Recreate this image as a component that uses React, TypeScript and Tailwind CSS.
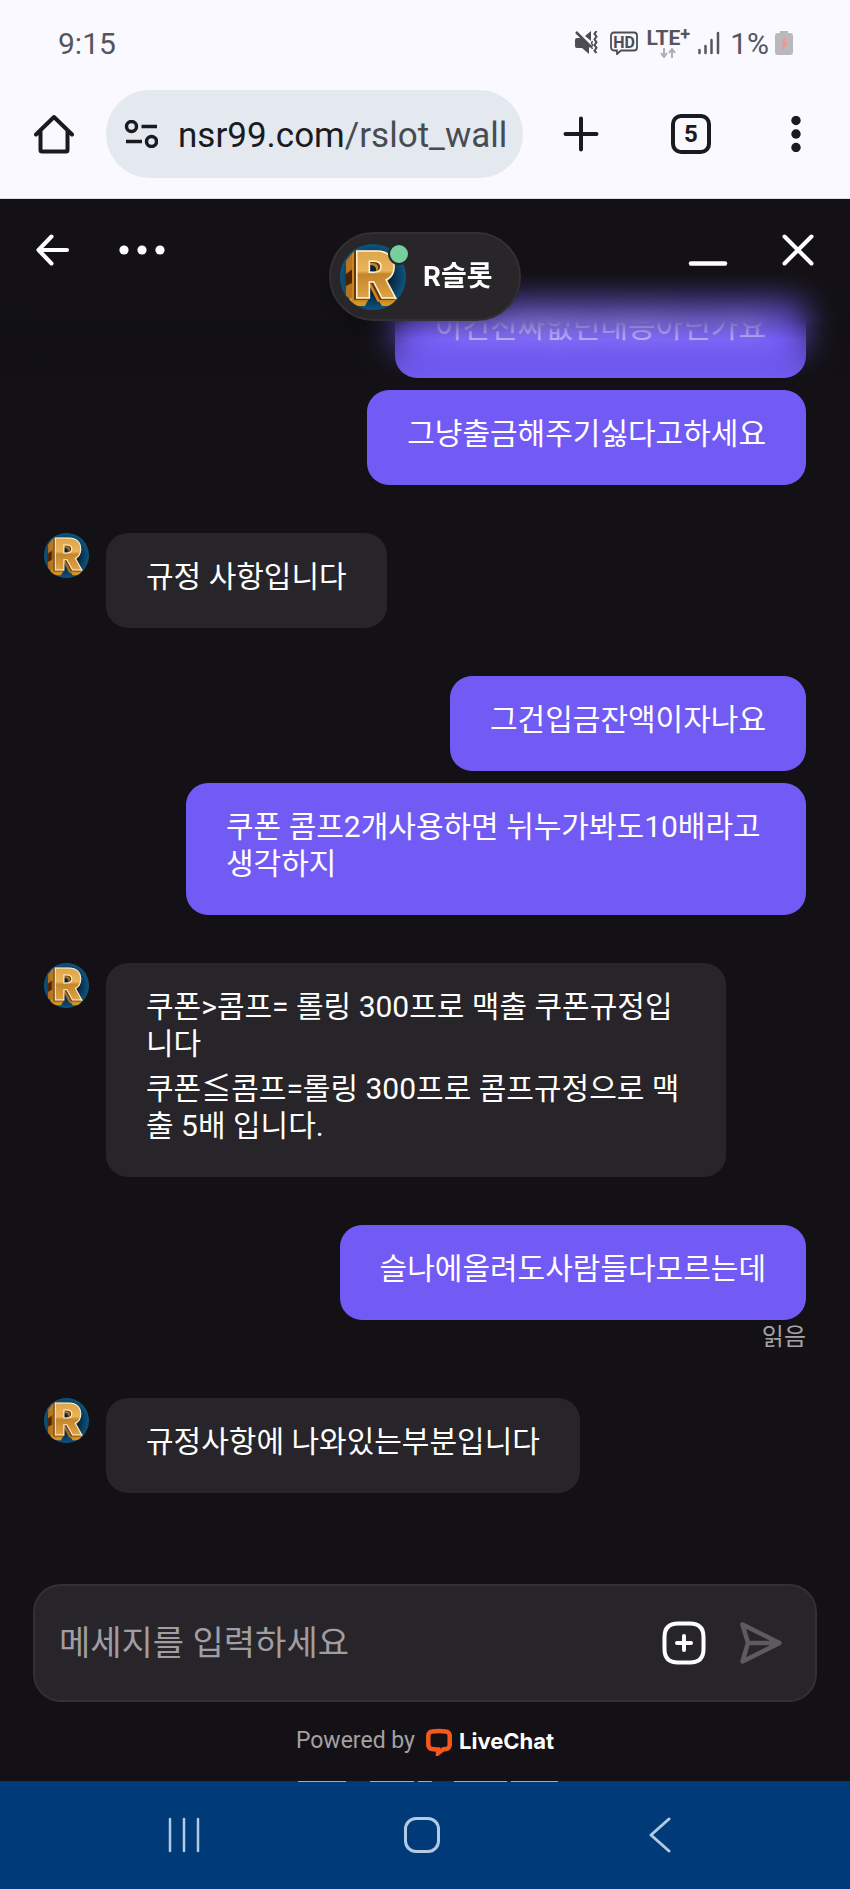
import { useState } from "react";

interface Message {
  id: number;
  from: "me" | "agent";
  lines: string[];
  grouped?: boolean;
  read?: boolean;
}

const messages: Message[] = [
  { id: 1, from: "me", lines: ["이건진짜없던대응아닌가요"] },
  { id: 2, from: "me", lines: ["그냥출금해주기싫다고하세요"], grouped: true },
  { id: 3, from: "agent", lines: ["규정 사항입니다"] },
  { id: 4, from: "me", lines: ["그건입금잔액이자나요"] },
  { id: 5, from: "me", lines: ["쿠폰 콤프2개사용하면 뉘누가봐도10배라고생각하지"], grouped: true },
  {
    id: 6,
    from: "agent",
    lines: ["쿠폰>콤프= 롤링 300프로 맥출 쿠폰규정입니다", "쿠폰≦콤프=롤링 300프로 콤프규정으로 맥출 5배 입니다."],
  },
  { id: 7, from: "me", lines: ["슬나에올려도사람들다모르는데"], read: true },
  { id: 8, from: "agent", lines: ["규정사항에 나와있는부분입니다"] },
];

function Avatar({ id, className }: { id: string; className: string }) {
  return (
    <svg viewBox="0 0 66 66" className={`overflow-visible ${className}`} aria-hidden="true">
      <defs>
        <radialGradient id={`${id}-bg`}>
          <stop offset="0.5" stopColor="#062238" />
          <stop offset="1" stopColor="#0f5580" />
        </radialGradient>
        <linearGradient id={`${id}-gold`} x1="0" y1="0" x2="0" y2="1">
          <stop offset="0" stopColor="#d99a3c" />
          <stop offset="0.45" stopColor="#e8b45c" />
          <stop offset="0.5" stopColor="#c5852c" />
          <stop offset="1" stopColor="#eeb956" />
        </linearGradient>
        <clipPath id={`${id}-clip`}>
          <circle cx="33" cy="33" r="33" />
        </clipPath>
      </defs>
      <g clipPath={`url(#${id}-clip)`}>
        <rect width="66" height="66" fill={`url(#${id}-bg)`} />
        <path d="M6 17l8-10v50l-8-5z" fill="#b8741c" />
        <path d="M6 30l8-6v14l-8 4z" fill="#4a2206" />
        <path d="M9 54h20l-4 8H12zM37 54h20l-6 8H42z" fill="#d8961f" />
      </g>
      <text
        x="35"
        y="54"
        textAnchor="middle"
        fill={`url(#${id}-gold)`}
        stroke="#fff3d6"
        strokeWidth="1.5"
        className="font-['Inter',sans-serif] text-[64px] font-black [filter:drop-shadow(-2px_1px_0_#6b3508)_drop-shadow(-2px_2px_0_#c98620)]"
      >
        R
      </text>
    </svg>
  );
}

function StatusBar() {
  return (
    <div className="flex h-[90px] items-center justify-between pr-[57px] pb-1 pl-[58px] text-[30px] text-[#55555b]">
      <span>9:15</span>
      <div className="flex items-center">
        <svg viewBox="0 0 24 24" className="size-6" fill="none" stroke="#4d4d53" strokeWidth="2" aria-hidden="true">
          <path d="M1 9q0-2 2-2h4l8 7v9l-7-6H3q-2 0-2-2zM11 5l6-5v10z" fill="#4d4d53" stroke="none" />
          <path d="M2 1l15 15" strokeWidth="2.500" />
          <path d="M22.500 0l-2 2.800 2 2.800-2 2.800 2 2.800-2 2.800 2 2.800-2 2.800 2 2.400" />
          <path d="M18.500 10l-1 2 1 2-1 2 1 2" strokeWidth="1.500" />
        </svg>
        <svg viewBox="0 0 28 24" className="ml-3 h-6 w-7" fill="none" stroke="#4d4d53" strokeWidth="1.800" aria-hidden="true">
          <path d="M4 1.500h20a3 3 0 0 1 3 3v12a3 3 0 0 1-3 3H11l-4 3.500v-3.500H4a3 3 0 0 1-3-3v-12a3 3 0 0 1 3-3z" />
          <text x="14" y="16.500" textAnchor="middle" fill="#4d4d53" stroke="none" className="text-[16px] font-bold">
            HD
          </text>
        </svg>
        <div className="ml-2 flex flex-col items-center">
          <span className="flex text-[21px] leading-5 font-bold text-[#55555b]">
            LTE<span className="text-lg leading-3">+</span>
          </span>
          <svg viewBox="0 0 16 10" className="h-[10px] w-4" fill="none" stroke="#aeaeb4" strokeWidth="2" aria-hidden="true">
            <path d="M4 0v8M1 5l3 4 3-4M12 10V2M9 5l3-4 3 4" />
          </svg>
        </div>
        <svg viewBox="0 0 22 24" className="ml-2 h-6 w-[22px]" stroke="#55555b" strokeWidth="2.500" strokeLinecap="round" aria-hidden="true">
          <path d="M1.500 19v3M7.500 15v7M13.500 9v13M20 2v20" />
        </svg>
        <span className="ml-[10px]">1%</span>
        <svg viewBox="0 0 18 26" className="ml-[6px] h-[26px] w-[18px]" aria-hidden="true">
          <path d="M5 1h8v2h2a3 3 0 0 1 3 3v16a3 3 0 0 1-3 3H3a3 3 0 0 1-3-3V6a3 3 0 0 1 3-3h2z" fill="#b9b9bd" />
          <path d="M9.500 8l-3 6h2.500l-1 5 4-7H9.500z" fill="#f0968a" stroke="#f0968a" />
        </svg>
      </div>
    </div>
  );
}

function BrowserBar() {
  return (
    <div className="flex items-center pr-[49px] pb-5 pl-[34px]">
      <button type="button" aria-label="홈">
        <svg viewBox="0 0 40 40" className="size-10" fill="none" stroke="#1a1b20" strokeWidth="4" strokeLinecap="round" strokeLinejoin="round">
          <path d="M2 20.500L20 3l18 17.500M6.500 17v19a1.500 1.500 0 0 0 1.500 1.500h24a1.500 1.500 0 0 0 1.500-1.500V17" />
        </svg>
      </button>
      <button type="button" className="ml-8 flex h-[88px] min-w-0 flex-1 items-center rounded-full bg-[#e4e8ef] pl-[18px]">
        <svg viewBox="0 0 34 28" className="h-7 w-[34px] shrink-0" fill="none" stroke="#1a1b20" strokeWidth="3.500" aria-hidden="true">
          <circle cx="7.500" cy="6.500" r="5" />
          <circle cx="27.500" cy="21.500" r="5" />
          <path d="M17.500 6.500H33M2 21.500h16" />
        </svg>
        <span className="ml-5 pt-1 text-[35px] leading-10 whitespace-nowrap text-[#474c50]">
          <span className="text-[#1a1b20]">nsr99.com</span>/rslot_wall
        </span>
      </button>
      <button type="button" aria-label="새 탭" className="ml-10">
        <svg viewBox="0 0 36 36" className="size-9" stroke="#1a1b20" strokeWidth="4" strokeLinecap="round">
          <path d="M18 2.500v31M2.500 18h31" />
        </svg>
      </button>
      <button
        type="button"
        aria-label="탭 5개"
        className="ml-[72px] size-10 rounded-[10px] border-4 border-[#1a1b20] text-2xl leading-8 font-bold text-[#1a1b20]"
      >
        5
      </button>
      <button type="button" aria-label="메뉴" className="ml-20">
        <svg viewBox="0 0 10 36" className="h-9 w-[10px]" fill="#1a1b20">
          <circle cx="5" cy="4.500" r="4.700" />
          <circle cx="5" cy="18" r="4.700" />
          <circle cx="5" cy="31.500" r="4.700" />
        </svg>
      </button>
    </div>
  );
}

function ChatHeader() {
  return (
    <header className="absolute inset-x-0 top-0 z-10">
      {/* soft edge the messages scroll under */}
      <div className="absolute inset-x-0 top-0 h-[190px] backdrop-blur-[16px] [mask-image:linear-gradient(to_bottom,#000_0,#000_122px,#000c_126px,#0008_144px,transparent_180px)]" />
      <div className="absolute inset-x-0 top-0 h-[140px] bg-linear-to-b from-[#131115] from-50% to-transparent" />
      <div className="relative flex items-start px-9 pt-[33px]">
        <div className="flex h-9 flex-1 items-center gap-[50px]">
          <button type="button" aria-label="뒤로">
            <svg viewBox="0 0 33 32" className="h-8 w-[33px]" fill="none" stroke="#fff" strokeWidth="4" strokeLinecap="round" strokeLinejoin="round">
              <path d="M31 16H2.500M15.500 2.500L2.500 16l13 13.500" />
            </svg>
          </button>
          <button type="button" aria-label="더보기">
            <svg viewBox="0 0 46 10" className="h-[10px] w-[46px]" fill="#fff">
              <circle cx="5" cy="5" r="4.600" />
              <circle cx="23" cy="5" r="4.600" />
              <circle cx="41" cy="5" r="4.600" />
            </svg>
          </button>
        </div>
        <div className="flex h-[89px] w-48 items-center rounded-full border-2 border-[#323034] bg-[#282629] pl-[9px] shadow-lg">
          <div className="relative size-[66px]">
            <Avatar id="head" className="size-full" />
            <span className="absolute -top-px -right-1 size-[22px] rounded-full border-2 border-[#282629] bg-[#76cf9c]" />
          </div>
          <h1 className="ml-[17px] text-[28px] leading-8 font-bold text-white">R슬롯</h1>
        </div>
        <div className="flex h-9 flex-1 items-center justify-end gap-[54px]">
          <button type="button" aria-label="최소화">
            <svg viewBox="0 0 40 32" className="h-8 w-10" stroke="#fff" strokeWidth="4.500" strokeLinecap="round">
              <path d="M3 29.500h34" />
            </svg>
          </button>
          <button type="button" aria-label="닫기">
            <svg viewBox="0 0 32 32" className="size-8" stroke="#fff" strokeWidth="4" strokeLinecap="round">
              <path d="M2.500 2.500l27 27M29.500 2.500l-27 27" />
            </svg>
          </button>
        </div>
      </div>
    </header>
  );
}

function MessageRow({ message }: { message: Message }) {
  const mine = message.from === "me";
  return (
    <li className={`flex ${message.grouped ? "mt-3" : "mt-12"} ${mine ? "flex-col items-end" : "items-start gap-[17px]"}`}>
      {!mine && <Avatar id={`msg-${message.id}`} className="size-[45px] shrink-0" />}
      <div
        className={`max-w-[620px] space-y-2 rounded-[22px] px-10 pt-[25px] pb-[33px] text-[30px] leading-[37px] text-white ${
          mine ? "bg-[#725bf4]" : "bg-[#272529]"
        }`}
      >
        {message.lines.map(line => <p key={line}>{line}</p>)}
      </div>
      {message.read && <span className="pt-1 text-2xl leading-[26px] text-[#a5a3a7]">읽음</span>}
    </li>
  );
}

export default function App() {
  const [draft, setDraft] = useState("");

  return (
    <div className="flex min-h-screen flex-col bg-[#131115] font-['Roboto','Noto_Sans_CJK_KR',sans-serif]">
      <div className="border-b border-[#d9dde6] bg-[#f9f9ff]">
        <StatusBar />
        <BrowserBar />
      </div>

      <main className="relative flex flex-1 flex-col">
        <ChatHeader />
        <ul className="flex flex-1 flex-col pt-9 pr-11 pb-10 pl-11">
          {messages.map(m => <MessageRow key={m.id} message={m} />)}
        </ul>

        <form
          onSubmit={e => { e.preventDefault(); setDraft(""); }}
          className="mx-[33px] flex h-[118px] items-center rounded-[28px] border-2 border-[#323034] bg-[#272529] pr-[33px] pl-6"
        >
          <input
            type="text"
            value={draft}
            onChange={e => setDraft(e.target.value)}
            aria-label="메세지"
            placeholder="메세지를 입력하세요"
            className="h-12 min-w-0 flex-1 text-[34px] text-white outline-none placeholder:text-[#a09ea2]"
          />
          <button type="button" aria-label="첨부">
            <svg viewBox="0 0 44 44" className="size-11" fill="none" stroke="#fff" strokeWidth="4" strokeLinecap="round">
              <path d="M16 2.500h12q13.500 0 13.500 13.500v12q0 13.500-13.500 13.500H16Q2.500 41.500 2.500 28V16Q2.500 2.500 16 2.500z" />
              <path d="M22 15v14M15 22h14" />
            </svg>
          </button>
          <button type="submit" aria-label="보내기" className="ml-[34px]">
            <svg viewBox="0 0 42 42" className="size-[42px]" fill="none" stroke="#5d5b5f" strokeWidth="4.500" strokeLinejoin="round">
              <path d="M2.500 2.500L39.500 21l-37 18.500L8 21zM8 21h31" />
            </svg>
          </button>
        </form>

        <div className="flex h-[79px] items-center justify-center text-[23px] text-[#a3a1a5]">
          Powered by
          <a href="#" className="ml-[10px] flex items-center gap-[6px] font-['Inter',sans-serif] text-[22px] font-bold text-white">
            <svg viewBox="0 0 28 28" className="size-7" fill="none" stroke="#f4581c" strokeWidth="4.500" aria-hidden="true">
              <path d="M11.500 21.500l-4.500-.400a4 4 0 0 1-3.700-4V7.500a4 4 0 0 1 3.700-4q7-.800 14 0a4 4 0 0 1 3.700 4v9.600a4 4 0 0 1-3.700 4l-3 .300-5 3.800v-6" />
            </svg>
            LiveChat
          </a>
        </div>
      </main>

      <nav className="relative flex h-[108px] items-center justify-between bg-[#003a78] pr-[178px] pl-[167px]">
        <svg viewBox="0 0 260 2" className="absolute top-0 left-[35%] h-[2px] w-[260px]" stroke="#a9ad9f" strokeWidth="2" aria-hidden="true">
          <path d="M0 0h48M72 0h44M120 0h14M156 0h53M213 0h47" />
        </svg>
        <button type="button" aria-label="최근 앱">
          <svg viewBox="0 0 34 36" className="h-9 w-[34px]" stroke="#b3cbe2" strokeWidth="2.500" strokeLinecap="round">
            <path d="M3 2v32M17 2v32M31 2v32" />
          </svg>
        </button>
        <button type="button" aria-label="홈 화면" className="size-9 rounded-[12px] border-3 border-[#b3cbe2]" />
        <button type="button" aria-label="이전">
          <svg viewBox="0 0 30 36" className="h-9 w-[30px]" fill="none" stroke="#b3cbe2" strokeWidth="3" strokeLinecap="round" strokeLinejoin="round">
            <path d="M27 2L9 18l18 16" />
          </svg>
        </button>
      </nav>
    </div>
  );
}
